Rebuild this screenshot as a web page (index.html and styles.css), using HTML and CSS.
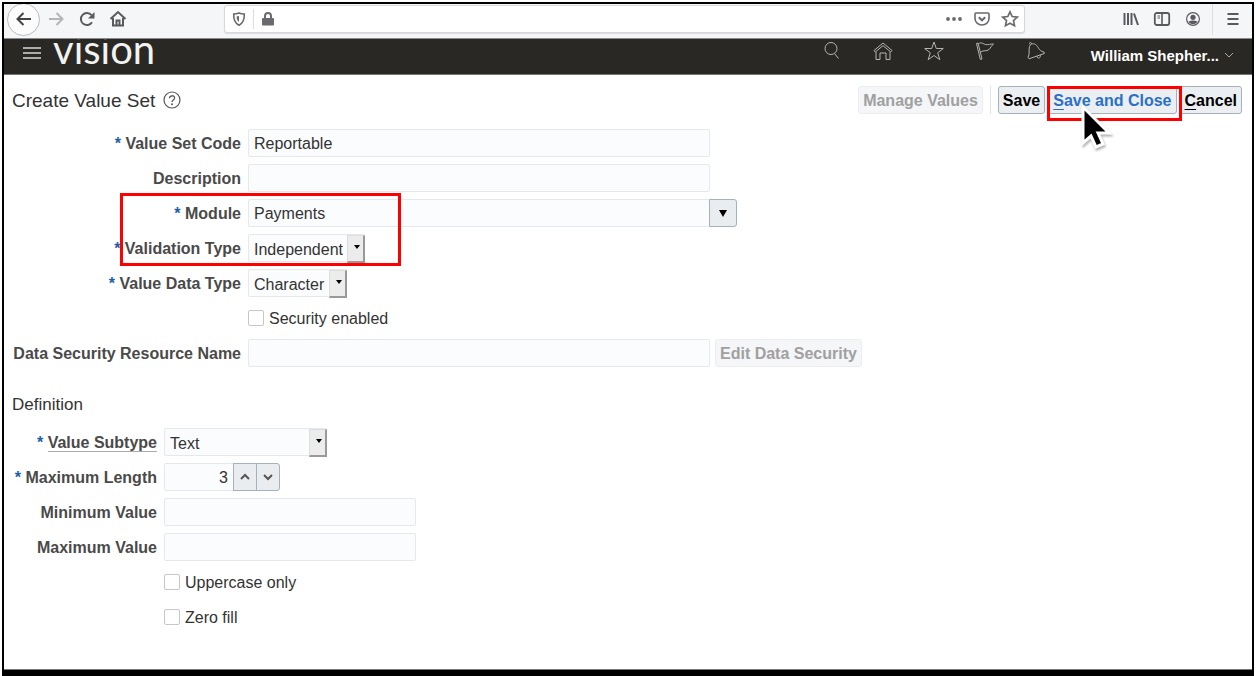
FILE: index.html
```html
<!DOCTYPE html>
<html lang="en">
<head>
    <meta charset="UTF-8">
    <meta name="viewport" content="width=device-width, initial-scale=1.0">
    <title>Create Value Set</title>
    <link rel="stylesheet" href="styles.css">
</head>
<body>

    <div class="window">

        <!-- Browser toolbar -->
        <div class="browser-bar">
            <button class="tool back" aria-label="Back">
                <svg width="18" height="18" viewBox="0 0 18 18"><path d="M16 9H3M8.500 3L2.500 9l6 6" stroke-width="2"/></svg>
            </button>
            <button class="tool forward" aria-label="Forward">
                <svg width="18" height="18" viewBox="0 0 18 18"><path d="M2 9h13M9.500 3l6 6-6 6" stroke-width="2"/></svg>
            </button>
            <button class="tool" aria-label="Reload">
                <svg width="18" height="18" viewBox="0 0 18 18"><path d="M14 12.200A6 6 0 1 1 13.500 5.200" stroke-width="2"/><path d="M16.500 2v6.500H10z" fill="currentColor" stroke="none"/></svg>
            </button>
            <button class="tool" aria-label="Home">
                <svg width="18" height="18" viewBox="0 0 18 18"><path d="M1.500 9L9 2l7.500 7M4 8v7.500h10V8" stroke-width="2"/><path d="M7.500 15.500v-5h3v5" stroke-width="2"/></svg>
            </button>

            <div class="url-box">
                <svg width="16" height="16" viewBox="0 0 16 16"><path d="M8 2c2 .9 3.600 1 5.300 1 .2 5-.8 9-5.300 11.200C3.500 12 2.500 8 2.700 3 4.400 3 6 2.900 8 2z" stroke-width="1.600"/><path d="M8 5v6C6 9.500 5.600 7.500 5.600 5.500z" fill="currentColor" stroke="none"/></svg>
                <span class="url-divider"></span>
                <svg width="16" height="16" viewBox="0 0 16 16"><path d="M5 8V5a3 3 0 0 1 6 0v3" stroke-width="2"/><rect x="2" y="7" width="12" height="7.500" rx="1" fill="currentColor" stroke="none"/></svg>
                <input class="url-input" type="text" aria-label="Address">
                <svg width="18" height="18" viewBox="0 0 18 18"><g fill="currentColor" stroke="none"><circle cx="3" cy="9" r="1.900"/><circle cx="9" cy="9" r="1.900"/><circle cx="15" cy="9" r="1.900"/></g></svg>
                <svg width="18" height="18" viewBox="0 0 18 18"><path d="M3 3h12c.6 0 1 .4 1 1v4.500a7 6.500 0 0 1-14 0V4c0-.6.4-1 1-1z" stroke-width="1.600"/><path d="M5.800 7.200L9 10.300l3.200-3.100" stroke-width="2"/></svg>
                <svg width="18" height="18" viewBox="0 0 18 18"><path d="M9 1.800l2.200 4.700 5.100.6-3.800 3.500 1 5.100L9 13.200l-4.500 2.500 1-5.100L1.700 7.100l5.100-.6z" stroke-width="1.700"/></svg>
            </div>

            <button class="tool" aria-label="Library">
                <svg width="18" height="18" viewBox="0 0 18 18"><path d="M2.500 3v12M6 3v12M9.500 3v12M12 3.500L16 15" stroke-width="2"/></svg>
            </button>
            <button class="tool" aria-label="Sidebar">
                <svg width="18" height="18" viewBox="0 0 18 18"><rect x="1.800" y="3" width="14.400" height="12" rx="2" stroke-width="1.800"/><path d="M9 3v12" stroke-width="1.600"/><path d="M4.500 6h2.500M4.500 8h2.500" stroke-width="1"/></svg>
            </button>
            <button class="tool" aria-label="Account">
                <svg width="18" height="18" viewBox="0 0 18 18"><circle cx="9" cy="9" r="6.400" stroke-width="1.200"/><circle cx="9" cy="7.300" r="2.600" fill="currentColor" stroke="none"/><path d="M4.500 11.500c2.500-1.500 6.500-1.500 9 0-1 2-2.700 2.700-4.500 2.700s-3.500-.7-4.500-2.700z" fill="currentColor" stroke="none"/></svg>
            </button>
            <span class="bar-divider"></span>
            <button class="tool" aria-label="Open menu">
                <svg width="18" height="18" viewBox="0 0 18 18"><path d="M3.500 4h11M3.500 9h11M3.500 14h11" stroke-width="1.800"/></svg>
            </button>
        </div>

        <!-- Application header -->
        <header class="app-header">
            <button class="nav-toggle" aria-label="Navigator">
                <svg width="18" height="14" viewBox="0 0 18 14"><path d="M0 2h18M0 7h18M0 12h18" stroke-width="1.600"/></svg>
            </button>
            <a class="logo" href="#">vision</a>
            <nav class="header-icons">
                <button aria-label="Search">
                    <svg width="22" height="22" viewBox="0 0 22 22"><circle cx="10" cy="8.500" r="6"/><path d="M13.500 13.500l4 5"/></svg>
                </button>
                <button aria-label="Home">
                    <svg width="22" height="22" viewBox="0 0 22 22"><path d="M2 10.500L11 3l9 7.500-1.300 1.500L11 5.600 3.300 12z"/><path d="M4 12v7.500h4V13h6v6.500h4V12"/></svg>
                </button>
                <button aria-label="Favorites">
                    <svg width="22" height="22" viewBox="0 0 22 22"><path d="M11 2l2.300 6.500h7l-5.600 4.300 2.100 6.900-5.800-4.200-5.800 4.200 2.100-6.900L1.700 8.500h7z"/></svg>
                </button>
                <button aria-label="Watchlist">
                    <svg width="22" height="22" viewBox="0 0 22 22"><path d="M2.500 3.500L4 3l4 16-1.700.4z"/><path d="M4.300 4c3-2.500 5 0 7.500.6 2.500.5 4.500-.8 7.700-.6-2 1.500-2.500 3.500-4.500 5.500-3 2.500-5 0-8.800 2.800"/></svg>
                </button>
                <button aria-label="Notifications">
                    <svg width="22" height="22" viewBox="0 0 22 22"><path d="M3 17.500c2-3 .5-8 1.500-11C5.300 4 8 3 10.500 4.500c3 2 3 6.500 8.500 7.500l.3 1.500L4 18.800z"/><path d="M5.500 4.800C3.500 3 5 1.500 7 3.700M12 16.200c.5 3 3.500 2.500 3.500-1"/></svg>
                </button>
            </nav>
            <button class="user-menu">
                William Shepher...
                <svg width="10" height="8" viewBox="0 0 10 8"><path d="M1 2l4 4 4-4" stroke="#aaa"/></svg>
            </button>
        </header>

        <main class="page">

            <div class="page-head">
                <h1>Create Value Set</h1>
                <button class="help" aria-label="Help">
                    <svg width="18" height="18" viewBox="0 0 18 18"><circle cx="9" cy="9" r="8" stroke-width="1.200"/><path d="M6.500 7.200C6.500 4 11.700 4 11.600 7c0 2-2.600 2-2.600 4" stroke-width="1.300"/><circle cx="9" cy="13.300" r="1" fill="currentColor" stroke="none"/></svg>
                </button>
                <div class="actions">
                    <button class="btn" disabled>Manage Values</button>
                    <span class="actions-divider"></span>
                    <button class="btn">Save</button>
                    <div class="save-close">
                        <button class="btn active"><u>S</u>ave and Close</button>
                        <span class="highlight highlight-save"></span>
                        <svg class="pointer" width="34" height="48" viewBox="0 0 34 48"><path d="M3 3v36l8-7 5 11 7-3-5-11h11z" fill="#000" stroke="#fff" stroke-width="3"/></svg>
                    </div>
                    <button class="btn"><u>C</u>ancel</button>
                </div>
            </div>

            <form class="fields main-fields">
                <label for="code"><span class="required">*</span> Value Set Code</label>
                <input class="text" type="text" id="code" value="Reportable">

                <label for="description">Description</label>
                <input class="text" type="text" id="description">

                <label for="module"><span class="required">*</span> Module</label>
                <div class="combo">
                    <input class="text" type="text" id="module" value="Payments">
                    <button class="combo-button" type="button" aria-label="Search modules">
                        <svg width="8" height="7" viewBox="0 0 8 7"><path d="M0 0h8L4 7z" fill="#000" stroke="none"/></svg>
                    </button>
                </div>

                <label for="validation"><span class="required">*</span> Validation Type</label>
                <div class="select">
                    <select id="validation">
                        <option>Independent</option>
                    </select>
                </div>

                <label for="dataType"><span class="required">*</span> Value Data Type</label>
                <div class="select">
                    <select id="dataType">
                        <option>Character</option>
                    </select>
                </div>

                <div class="check">
                    <input type="checkbox" id="security">
                    <label for="security">Security enabled</label>
                </div>

                <label for="resource">Data Security Resource Name</label>
                <div class="with-button">
                    <input class="text" type="text" id="resource">
                    <button class="btn" type="button" disabled>Edit Data Security</button>
                </div>

                <span class="highlight highlight-fields"></span>
            </form>

            <h2>Definition</h2>

            <form class="fields definition-fields">
                <label for="subtype"><span class="required">*</span> <span class="hint">Value Subtype</span></label>
                <div class="select wide">
                    <select id="subtype">
                        <option>Text</option>
                    </select>
                </div>

                <label for="maxLength"><span class="required">*</span> Maximum Length</label>
                <div class="spinner">
                    <input class="text" type="text" id="maxLength" value="3">
                    <button type="button" aria-label="Increase">
                        <svg width="10" height="8" viewBox="0 0 10 8"><path d="M1 6l4-4 4 4" stroke-width="2"/></svg>
                    </button>
                    <button type="button" aria-label="Decrease">
                        <svg width="10" height="8" viewBox="0 0 10 8"><path d="M1 2l4 4 4-4" stroke-width="2"/></svg>
                    </button>
                </div>

                <label for="minValue">Minimum Value</label>
                <input class="text" type="text" id="minValue">

                <label for="maxValue">Maximum Value</label>
                <input class="text" type="text" id="maxValue">

                <div class="check">
                    <input type="checkbox" id="uppercase">
                    <label for="uppercase">Uppercase only</label>
                </div>

                <div class="check">
                    <input type="checkbox" id="zeroFill">
                    <label for="zeroFill">Zero fill</label>
                </div>
            </form>

        </main>
    </div>

</body>
</html>
```
FILE: styles.css
```css
/* General reset */
* {
    margin: 0;
    padding: 0;
    box-sizing: border-box;
    font-family: "Liberation Sans", Arial, sans-serif;
}

body {
    padding: 2px 2px 0;
    background-color: white;
    font-size: 16px;
    color: #333;
}

button {
    background: none;
    border: none;
    color: inherit;
    cursor: pointer;
}

svg {
    display: block;
    flex: none;
    fill: none;
    stroke: currentColor;
}

.window {
    display: flex;
    flex-direction: column;
    min-height: calc(100vh - 2px);
    border: 2px solid black;
    border-bottom-width: 6px;
}

/* Browser toolbar */
.browser-bar {
    display: flex;
    align-items: center;
    height: 35px;
    padding: 0 4px 4px;
    overflow: hidden;
    background-color: #f5f6f8;
    border-bottom: 1px solid #8a8a8c;
    color: #5a5a5e;
}

.tool {
    display: flex;
    flex: none;
    justify-content: center;
    align-items: center;
    width: 31px;
    height: 28px;
}

.back {
    width: 33px;
    height: 33px;
    margin-left: -1px;
    border: 1px solid #bbb;
    border-radius: 50%;
    background-color: #fcfcfc;
    color: #444;
}

.forward {
    color: #b5b5b8;
}

.url-box {
    display: flex;
    flex: 1;
    align-items: center;
    gap: 10px;
    height: 28px;
    margin: 0 90px 0 91px;
    padding: 0 5px 0 6px;
    background-color: white;
    border: 1px solid #d8d8db;
    border-radius: 3px;
    box-shadow: 0 1px 1px #dcdcdf;
    color: #6a6a6e;
}

.url-divider {
    width: 1px;
    height: 20px;
    margin: 0 -4px;
    background-color: #ddd;
}

.url-input {
    flex: 1;
    min-width: 0;
    border: none;
    outline: none;
}

.bar-divider {
    width: 1px;
    height: 32px;
    margin: 0 4px;
    background-color: #ddd;
}

/* Application header */
.app-header {
    display: flex;
    align-items: center;
    height: 36px;
    padding: 0 17px 0 19px;
    overflow: hidden;
    background-color: #2a2824;
    border-bottom: 1px solid #777;
    color: #d8d8d6;
}

.nav-toggle {
    margin-top: -7px;
}

.logo {
    margin: -16px auto 0 12px;
    font-family: Lato, sans-serif;
    font-size: 40px;
    line-height: 38px;
    color: #f2f2f0;
    text-decoration: none;
}

.header-icons {
    display: flex;
    margin: -12px 29px 0 0;
    color: #b4b4b0;
}

.header-icons button {
    display: flex;
    justify-content: center;
    width: 51px;
}

.user-menu {
    display: flex;
    align-items: center;
    gap: 5px;
    margin-top: -3px;
    font-size: 15px;
    font-weight: bold;
    color: white;
}

.user-menu svg {
    margin-right: 1px;
}

/* Page */
.page {
    flex: 1;
    padding: 11px 10px 38px 8px;
    border-bottom: 1px solid #777;
}

.page-head {
    display: flex;
    align-items: center;
    height: 28px;
    margin-bottom: 15px;
}

h1 {
    font-size: 19px;
    font-weight: normal;
    line-height: 24px;
    padding-top: 2px;
}

h2 {
    margin: 26px 0 11px;
    font-size: 17px;
    font-weight: normal;
    line-height: 24px;
}

.help {
    margin-left: 8px;
    color: #555;
}

.actions {
    display: flex;
    align-items: center;
    gap: 3px;
    margin-left: auto;
}

.actions-divider {
    width: 1px;
    height: 28px;
    margin: 0 4px;
    background-color: #dfe3e6;
}

.btn {
    height: 28px;
    padding: 2px 4px 0;
    background-color: #eceff2;
    border: 1px solid #a5b1bd;
    border-radius: 3px;
    font-size: 16px;
    font-weight: bold;
    color: black;
    white-space: nowrap;
}

.btn u {
    text-underline-offset: 3px;
}

.btn.active {
    color: #2a70c8;
}

.btn:disabled {
    background-color: #f5f6f7;
    border-color: #ebedef;
    color: #a0a0a0;
    cursor: default;
}

.save-close {
    position: relative;
}

/* Callouts drawn over the page */
.highlight {
    position: absolute;
    border: 3px solid #f00;
    pointer-events: none;
}

.highlight-save {
    top: 0;
    right: -5px;
    left: -1px;
    height: 35px;
    z-index: 1;
}

.highlight-fields {
    top: 64px;
    left: 108px;
    width: 281px;
    height: 73px;
}

.pointer {
    position: absolute;
    top: 18px;
    left: 32px;
    z-index: 2;
    pointer-events: none;
    filter: drop-shadow(1px 2px 1px rgba(0, 0, 0, 0.3));
}

/* Form fields */
.fields {
    display: grid;
    grid-auto-rows: 28px;
    gap: 7px;
    align-items: center;
    position: relative;
}

.main-fields {
    grid-template-columns: 229px 1fr;
}

.definition-fields {
    grid-template-columns: 145px 1fr;
}

.fields > label {
    padding-top: 2px;
    text-align: right;
    font-weight: bold;
    color: #4a4a4a;
    white-space: nowrap;
}

.required {
    color: #1c5fa8;
}

.hint {
    border-bottom: 1px solid #aaa;
}

.text {
    width: 462px;
    height: 28px;
    padding: 2px 5px 0;
    background-color: #fbfcfe;
    border: 1px solid #e6e9eb;
    border-radius: 2px;
    font-size: 16px;
    color: #333;
}

.definition-fields .text {
    width: 252px;
}

.combo,
.with-button,
.spinner {
    display: flex;
}

.with-button {
    gap: 5px;
}

.combo-button,
.spinner button {
    display: flex;
    justify-content: center;
    align-items: center;
    width: 28px;
    height: 28px;
    margin-left: -1px;
    background-color: #eaedf0;
    border: 1px solid #a5b1bd;
    border-radius: 0 3px 3px 0;
}

.definition-fields .spinner .text {
    width: 70px;
    text-align: right;
}

.spinner button {
    width: 24px;
    color: #555;
}

.spinner button:nth-of-type(1) {
    border-radius: 0;
}

.select {
    position: relative;
    justify-self: start;
}

.select select {
    display: block;
    appearance: none;
    height: 28px;
    padding: 3px 21px 0 5px;
    background-color: #fbfcfe;
    border: 1px solid #e6e9eb;
    border-radius: 2px;
    font-size: 16px;
    color: #333;
}

.select.wide select {
    width: 163px;
}

/* Raised drop-down arrow */
.select::before {
    content: "";
    position: absolute;
    top: 1px;
    right: 0;
    width: 15px;
    height: 25px;
    background-color: #ececec;
    border: 1px solid #ddd;
    border-right: 2px solid #999;
    border-bottom: 2px solid #999;
    pointer-events: none;
}

.select::after {
    content: "";
    position: absolute;
    top: 11px;
    right: 5px;
    border: 3px solid transparent;
    border-top: 4px solid black;
    border-bottom: none;
    pointer-events: none;
}

.check {
    display: flex;
    grid-column: 2;
    align-items: center;
    gap: 5px;
}

.check label {
    padding-top: 2px;
}

.check input {
    appearance: none;
    width: 16px;
    height: 16px;
    background-color: white;
    border: 1px solid #c4c8ca;
    border-radius: 2px;
}
```
